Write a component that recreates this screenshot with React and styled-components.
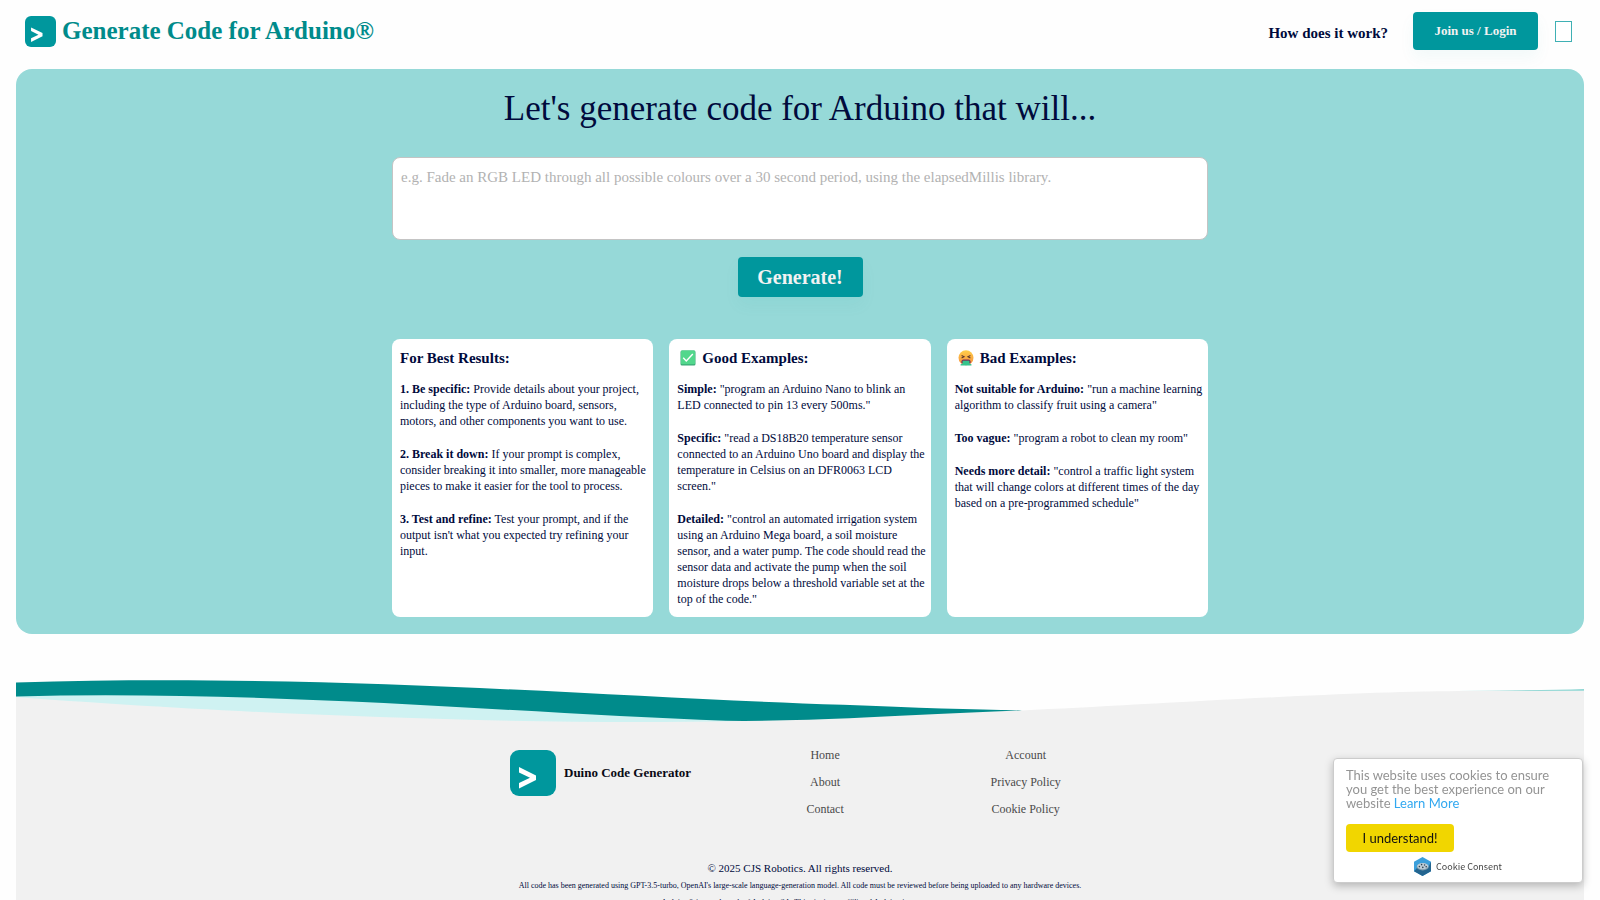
import React from 'react';
import styled, { createGlobalStyle } from 'styled-components';

const teal = '#00979d';
const navy = '#000a3c';

const GlobalStyle = createGlobalStyle`
  *, *::before, *::after { box-sizing: border-box; }
  body {
    margin: 0;
    background: #fefefe;
    color: ${navy};
    font-family: "Liberation Serif", "Times New Roman", serif;
  }
  h1, h2, p, ul { margin: 0; padding: 0; }
  a { color: inherit; text-decoration: none; }
`;

const Page = styled.div`
  padding: 0 16px;
`;

const Header = styled.header`
  display: flex;
  align-items: center;
  justify-content: space-between;
  height: 69px;
  padding: 0 11px 7px 9px;
`;

const Brand = styled.a`
  display: flex;
  align-items: center;
  gap: 6px;
  color: #008b8b;
  font-size: 25px;
  font-weight: 700;
  line-height: 28px;
`;

const LogoSvg = styled.svg`
  display: block;
  flex: none;
  width: ${(p) => p.$size}px;
  height: ${(p) => p.$size}px;
`;

const Nav = styled.nav`
  display: flex;
  align-items: center;
`;

const NavLink = styled.a`
  margin-right: 25px;
  padding-top: 4px;
  font-size: 15px;
  font-weight: 700;
  line-height: 18px;
`;

const Button = styled.button`
  width: 125px;
  height: ${(p) => (p.$large ? 40 : 38)}px;
  padding: 0;
  border: 0;
  border-radius: 4px;
  background: ${teal};
  box-shadow: 0 8px 16px rgba(0, 151, 157, 0.05);
  color: #f2f2f2;
  font-family: inherit;
  font-size: ${(p) => (p.$large ? 20 : 13)}px;
  font-weight: 700;
  cursor: pointer;
`;

const ThemeToggle = styled.button`
  display: block;
  margin-left: 17px;
  padding: 0;
  border: 0;
  background: none;
  cursor: pointer;

  svg { display: block; }
`;

const Hero = styled.main`
  display: flex;
  flex-direction: column;
  align-items: center;
  padding: 20px 16px 17px;
  border-radius: 16px;
  background: #96d9d8;
`;

const HeroTitle = styled.h1`
  font-size: 35px;
  font-weight: 400;
  line-height: 40px;
  text-align: center;
`;

const PromptForm = styled.form`
  display: flex;
  flex-direction: column;
  align-items: center;
  gap: 17px;
  width: 100%;
  max-width: 816px;
  margin-top: 28px;
`;

const Prompt = styled.textarea`
  display: block;
  width: 100%;
  height: 83px;
  padding: 10px 8px;
  border: 1px solid #c4c4c4;
  border-radius: 8px;
  outline: 0;
  resize: none;
  background: #fff;
  color: ${navy};
  font-family: inherit;
  font-size: 15px;
  line-height: 18px;

  &::placeholder { color: #b2b2b2; opacity: 1; }
`;

const Cards = styled.section`
  display: grid;
  grid-template-columns: repeat(3, 1fr);
  gap: 16px;
  width: 100%;
  max-width: 816px;
  margin-top: 42px;
`;

const Card = styled.article`
  padding: 8px 2px 10px 8px;
  border-radius: 8px;
  background: #fff;
`;

const CardTitle = styled.h2`
  display: flex;
  align-items: center;
  gap: 6px;
  margin-bottom: 12px;
  font-size: 15px;
  line-height: 22px;

  svg { display: block; margin-left: 3px; }
`;

const Tip = styled.p`
  font-size: 12px;
  line-height: 16px;

  & + & { margin-top: 17px; }
`;

const WaveSvg = styled.svg`
  display: block;
  width: 100%;
  height: 46px;
  margin-top: 44px;
`;

const Footer = styled.footer`
  padding: 18px 16px 24px;
  background: #f1f1f1;
`;

const FooterColumns = styled.div`
  display: grid;
  grid-template-columns: 5fr 4fr 4fr;
  max-width: 652px;
  margin: 0 auto;
`;

const FooterBrand = styled.a`
  display: flex;
  align-items: center;
  align-self: start;
  gap: 8px;
  margin-top: 8px;
  padding-left: 36px;
  color: #0a0a14;
  font-size: 13px;
  font-weight: 700;
`;

const FooterLinks = styled.ul`
  list-style: none;
  color: #4a4a4a;
  font-size: 12px;
  line-height: 27px;
  text-align: center;
`;

const Copyright = styled.p`
  margin-top: 36px;
  font-size: 11px;
  line-height: 18px;
  text-align: center;
`;

const Disclaimer = styled.p`
  font-size: 8px;
  line-height: 17px;
  text-align: center;
`;

const CookieBox = styled.aside`
  position: fixed;
  right: 17px;
  bottom: 17px;
  width: 250px;
  padding: 9px 12px 6px;
  border: 1px solid #ccc;
  border-radius: 4px;
  background: #fff;
  box-shadow: 0 3px 8px rgba(0, 0, 0, 0.25);
  color: #949494;
  font-family: Lato, "Liberation Sans", sans-serif;
  font-size: 13px;
  line-height: 14px;

  p a { color: #31a8f0; }
`;

const CookieButton = styled.button`
  display: block;
  width: 108px;
  height: 28px;
  margin: 14px 0 5px;
  padding: 0;
  border: 0;
  border-radius: 4px;
  background: #f1d600;
  color: #111;
  font-family: inherit;
  font-size: 13px;
  cursor: pointer;
`;

const CookieCredit = styled.a`
  display: flex;
  align-items: center;
  justify-content: center;
  gap: 5px;
  color: #444;
  font-family: "Noto Sans CJK SC", "Open Sans", sans-serif;
  font-size: 9px;
`;

const Logo = ({ size }) => (
  <LogoSvg $size={size} viewBox="0 0 46 46" aria-hidden="true">
    <rect width="46" height="46" rx="9" fill={teal} />
    <path d="M9 17 26 25.4V30L9 38.4V33L20 27.7 9 22.4Z" fill="#fff" />
  </LogoSvg>
);

const CheckIcon = () => (
  <svg width="16" height="16" viewBox="0 0 16 16" aria-hidden="true">
    <rect x="0.5" y="0.5" width="15" height="15" rx="1.5" fill="#3aa876" />
    <rect x="1" y="0.5" width="14" height="13.8" rx="1" fill="#52d78c" />
    <path d="M3.2 7.8 6.3 11 12.8 4" fill="none" stroke="#fff" strokeWidth="1.4" />
  </svg>
);

const SickIcon = () => (
  <svg width="16" height="16" viewBox="0 0 16 16" aria-hidden="true">
    <defs>
      <linearGradient id="face" x1="0" y1="0" x2="0" y2="1">
        <stop offset="0" stopColor="#ffd04a" />
        <stop offset="1" stopColor="#f58b3c" />
      </linearGradient>
    </defs>
    <circle cx="8" cy="7.8" r="7.5" fill="url(#face)" />
    <path d="M3.6 5.6 6 6.8 3.6 8M12.4 5.6 10 6.8 12.4 8" fill="none" stroke="#5b3a2e" strokeWidth="1.1" />
    <path d="M3.4 13.2V11.4Q3.6 9.6 5.4 9.6H10.6Q12.4 9.6 12.6 11.4V13.2Z" fill="#7a2f58" />
    <path d="M4.6 10.8H11.4V13.4L13.6 14.6 13.4 15.6H2.6L2.4 14.6 4.6 13.4Z" fill="#35c48d" />
  </svg>
);

const Wave = () => (
  <WaveSvg viewBox="0 0 1568 46" preserveAspectRatio="none" aria-hidden="true">
    <path d="M0 17L300 26 724 42 1006 32.4C1130 27 1330 12.8 1457 13L1568 12.6V46H0Z" fill="#f1f1f1" />
    <path d="M0 19C180 33 480 48 724 43L600 30 120 14 0 16Z" fill="#cff2f2" />
    <path d="M0 4.4C330-5 600 20 827 26.8Q940 31.5 1006 32.4Q920 36 848 39.6Q760 43.6 710 42.8C500 35 250 12 0 18.4Z" fill="#008b8b" />
    <path d="M1440 13Q1520 12.6 1568 11V12.8Z" fill="#8fd6d3" />
  </WaveSvg>
);

const CookieLogo = () => (
  <svg width="17" height="19" viewBox="0 0 17 19" aria-hidden="true">
    <path d="M8.5 0 17 4.7V14.3L8.5 19 0 14.3V4.7Z" fill="#3b9fdb" />
    <path d="M17 4.7V14.3L8.5 19 0 14.3 3 11H14Z" fill="#24658f" />
    <ellipse cx="8.7" cy="9.8" rx="6" ry="3.6" fill="#7f9cad" />
    <ellipse cx="8.7" cy="9.1" rx="5.6" ry="3.1" fill="#bccdd8" />
    <circle cx="5.4" cy="9.6" r="0.8" fill="#2d4351" />
    <circle cx="7.6" cy="7.6" r="0.8" fill="#2d4351" />
    <circle cx="8.8" cy="10.4" r="0.8" fill="#2d4351" />
    <circle cx="10.6" cy="8" r="0.7" fill="#2d4351" />
    <circle cx="12.2" cy="9.8" r="0.8" fill="#2d4351" />
  </svg>
);

const cards = [
  {
    title: 'For Best Results:',
    tips: [
      ['1. Be specific:', 'Provide details about your project, including the type of Arduino board, sensors, motors, and other components you want to use.'],
      ['2. Break it down:', 'If your prompt is complex, consider breaking it into smaller, more manageable pieces to make it easier for the tool to process.'],
      ['3. Test and refine:', "Test your prompt, and if the output isn't what you expected try refining your input."],
    ],
  },
  {
    title: 'Good Examples:',
    icon: <CheckIcon />,
    tips: [
      ['Simple:', '"program an Arduino Nano to blink an LED connected to pin 13 every 500ms."'],
      ['Specific:', '"read a DS18B20 temperature sensor connected to an Arduino Uno board and display the temperature in Celsius on an DFR0063 LCD screen."'],
      ['Detailed:', '"control an automated irrigation system using an Arduino Mega board, a soil moisture sensor, and a water pump. The code should read the sensor data and activate the pump when the soil moisture drops below a threshold variable set at the top of the code."'],
    ],
  },
  {
    title: 'Bad Examples:',
    icon: <SickIcon />,
    tips: [
      ['Not suitable for Arduino:', '"run a machine learning algorithm to classify fruit using a camera"'],
      ['Too vague:', '"program a robot to clean my room"'],
      ['Needs more detail:', '"control a traffic light system that will change colors at different times of the day based on a pre-programmed schedule"'],
    ],
  },
];

const footerLinks = [
  ['Home', 'About', 'Contact'],
  ['Account', 'Privacy Policy', 'Cookie Policy'],
];

export default function App() {
  return (
    <>
      <GlobalStyle />
      <Page>
        <Header>
          <Brand href="#home">
            <Logo size={31} />
            Generate Code for Arduino®
          </Brand>
          <Nav>
            <NavLink href="#how">How does it work?</NavLink>
            <Button type="button">Join us / Login</Button>
            <ThemeToggle type="button" aria-label="Toggle theme">
              <svg width="18" height="22" viewBox="0 0 18 22">
                <rect x="0.5" y="1.5" width="16" height="20" fill="#fff" stroke="#3fb0b4" />
              </svg>
            </ThemeToggle>
          </Nav>
        </Header>

        <Hero>
          <HeroTitle>Let's generate code for Arduino that will...</HeroTitle>
          <PromptForm onSubmit={(e) => e.preventDefault()}>
            <Prompt
              aria-label="Describe your project"
              placeholder="e.g. Fade an RGB LED through all possible colours over a 30 second period, using the elapsedMillis library."
            />
            <Button $large type="submit">Generate!</Button>
          </PromptForm>
          <Cards>
            {cards.map((card) => (
              <Card key={card.title}>
                <CardTitle>{card.icon}{card.title}</CardTitle>
                {card.tips.map(([label, text]) => (
                  <Tip key={label}><strong>{label}</strong> {text}</Tip>
                ))}
              </Card>
            ))}
          </Cards>
        </Hero>

        <Wave />
        <Footer>
          <FooterColumns>
            <FooterBrand href="#home">
              <Logo size={46} />
              Duino Code Generator
            </FooterBrand>
            {footerLinks.map((links) => (
              <FooterLinks key={links[0]}>
                {links.map((link) => (
                  <li key={link}><a href="#page">{link}</a></li>
                ))}
              </FooterLinks>
            ))}
          </FooterColumns>
          <Copyright>© 2025 CJS Robotics. All rights reserved.</Copyright>
          <Disclaimer>
            All code has been generated using GPT-3.5-turbo, OpenAI's large-scale language-generation model. All code must be reviewed before being uploaded to any hardware devices.
          </Disclaimer>
          <Disclaimer>
            Arduino® is a trademark of Arduino SA. This site is not affiliated Arduino in any way.
          </Disclaimer>
        </Footer>
      </Page>

      <CookieBox aria-label="Cookie notice">
        <p>
          This website uses cookies to ensure you get the best experience on our website <a href="#cookies">Learn More</a>
        </p>
        <CookieButton type="button">I understand!</CookieButton>
        <CookieCredit href="#consent">
          <CookieLogo />
          Cookie Consent
        </CookieCredit>
      </CookieBox>
    </>
  );
}
